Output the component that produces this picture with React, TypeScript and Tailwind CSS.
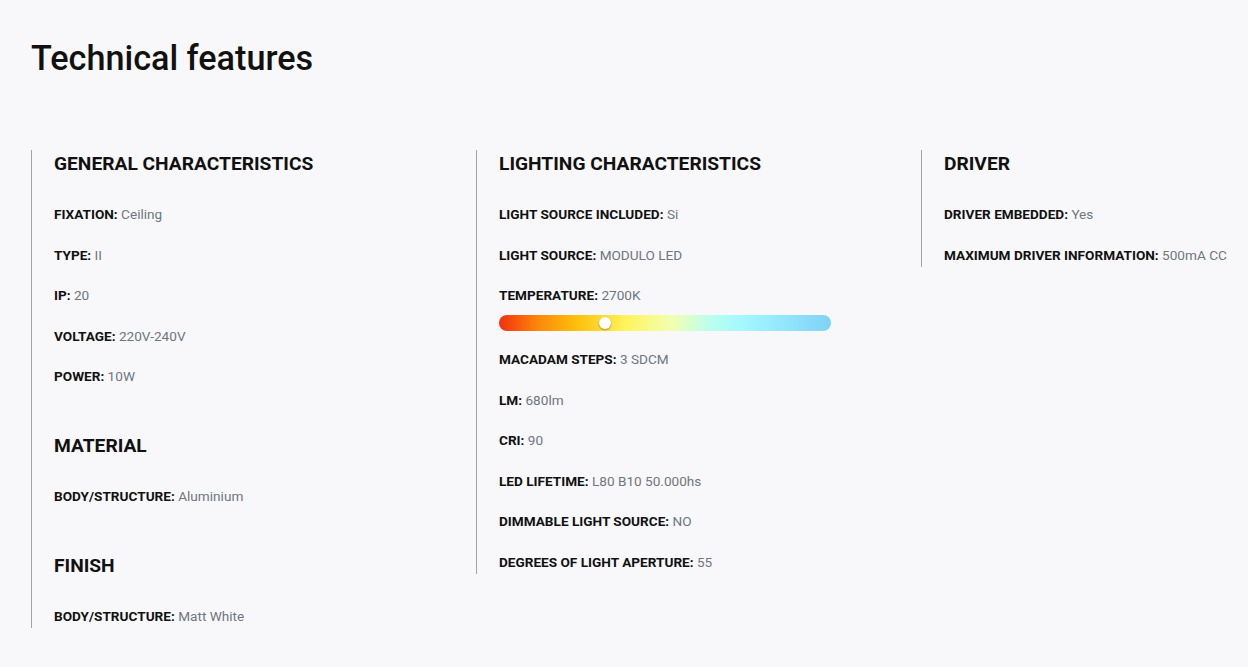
import React from "react"

type Row = { label: string; value: string }
type Section = { title: string; rows: Row[]; temperatureAfter?: string }

const columns: Section[][] = [
  [
    {
      title: "GENERAL CHARACTERISTICS",
      rows: [
        { label: "FIXATION", value: "Ceiling" },
        { label: "TYPE", value: "II" },
        { label: "IP", value: "20" },
        { label: "VOLTAGE", value: "220V-240V" },
        { label: "POWER", value: "10W" },
      ],
    },
    {
      title: "MATERIAL",
      rows: [{ label: "BODY/STRUCTURE", value: "Aluminium" }],
    },
    {
      title: "FINISH",
      rows: [{ label: "BODY/STRUCTURE", value: "Matt White" }],
    },
  ],
  [
    {
      title: "LIGHTING CHARACTERISTICS",
      temperatureAfter: "TEMPERATURE",
      rows: [
        { label: "LIGHT SOURCE INCLUDED", value: "Si" },
        { label: "LIGHT SOURCE", value: "MODULO LED" },
        { label: "TEMPERATURE", value: "2700K" },
        { label: "MACADAM STEPS", value: "3 SDCM" },
        { label: "LM", value: "680lm" },
        { label: "CRI", value: "90" },
        { label: "LED LIFETIME", value: "L80 B10 50.000hs" },
        { label: "DIMMABLE LIGHT SOURCE", value: "NO" },
        { label: "DEGREES OF LIGHT APERTURE", value: "55" },
      ],
    },
  ],
  [
    {
      title: "DRIVER",
      rows: [
        { label: "DRIVER EMBEDDED", value: "Yes" },
        { label: "MAXIMUM DRIVER INFORMATION", value: "500mA CC" },
      ],
    },
  ],
]

const TempBar = () => (
  <div className="relative -mt-[13px] h-4 w-[332px] rounded-full bg-[linear-gradient(90deg,#f2300f_0%,#fb8a0a_12%,#ffc20e_24%,#fff45c_38%,#f2ffb0_52%,#b9fff0_64%,#a3f7ff_74%,#7fd2f6_100%)]">
    {/* knob */}
    <div className="absolute left-[100px] top-[2px] h-3 w-3 rounded-full bg-white shadow-[0_1px_2px_rgba(0,0,0,0.35)]" />
  </div>
)

const SpecRow = ({ row }: { row: Row }) => (
  <div className="h-5 text-[13.6px] leading-[17px] whitespace-nowrap">
    <span className="font-bold text-[#111]">{row.label}:</span>{" "}
    <span className="text-[#6f767e]">{row.value}</span>
  </div>
)

export default function App() {
  return (
    <div
      className="min-h-screen overflow-hidden bg-[#f8f8fa] px-[31px] pt-[38px] text-[#111]"
      style={{ fontFamily: "Roboto, 'Liberation Sans', sans-serif" }}
    >
      <h1 className="text-[34.2px] font-medium leading-10">Technical features</h1>

      <div className="mt-[72px] flex items-start">
        {columns.map((sections, ci) => (
          <div
            key={ci}
            className={
              ci < 2
                ? "w-[445px] shrink-0 border-l border-[#a3a3a3] pl-[22px]"
                : "min-w-0 flex-1 border-l border-[#a3a3a3] pl-[22px]"
            }
          >
            <div className="flex flex-col gap-11">
              {sections.map((s) => (
                <div key={s.title}>
                  <h2 className="text-[19.2px] font-bold leading-7">{s.title}</h2>
                  <div className="mt-7 flex flex-col gap-[20.5px]">
                    {s.rows.map((r) => (
                      <React.Fragment key={r.label}>
                        <SpecRow row={r} />
                        {s.temperatureAfter === r.label && <TempBar />}
                      </React.Fragment>
                    ))}
                  </div>
                </div>
              ))}
            </div>
          </div>
        ))}
      </div>
    </div>
  )
}
